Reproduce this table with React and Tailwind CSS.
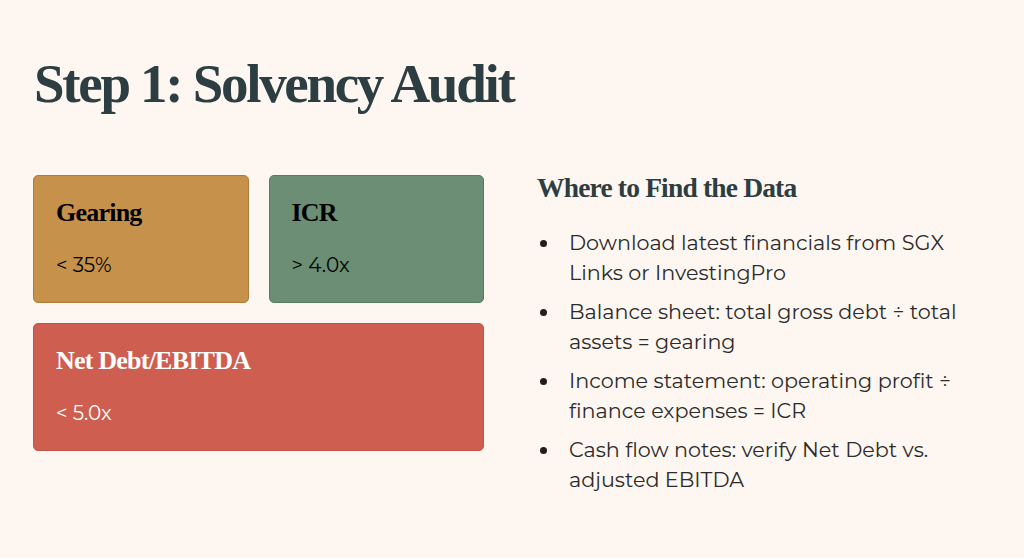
import React from 'react';

const serif = { fontFamily: '"Liberation Serif", "DejaVu Serif", serif' };

const metrics = [
  { name: 'Gearing', value: '< 35%', cls: 'bg-[#c6914a] border-[#b07c38] text-black' },
  { name: 'ICR', value: '> 4.0x', cls: 'bg-[#6b8e74] border-[#587a61] text-black' },
];

const sources = [
  'Download latest financials from SGX Links or InvestingPro',
  'Balance sheet: total gross debt ÷ total assets = gearing',
  'Income statement: operating profit ÷ finance expenses = ICR',
  'Cash flow notes: verify Net Debt vs. adjusted EBITDA',
];

const MetricCard = ({ name, value, cls }) => (
  <div className={`h-[128px] rounded-[5px] border px-[22px] pt-[21px] ${cls}`}>
    <h3 className="text-[26px] font-bold leading-[32px] tracking-[-0.03em]" style={serif}>
      {name}
    </h3>
    <p className="mt-[24px] text-[20px] leading-6">{value}</p>
  </div>
);

export default function App() {
  return (
    <div
      className="w-[1024px] h-[558px] bg-[#fef7f1] pl-[33px] pr-[34px] pt-[52px] text-[#2b2b2b] overflow-hidden"
      style={{ fontFamily: 'Montserrat, "Open Sans", sans-serif' }}
    >
      <h1
        className="pl-[1px] text-[55px] font-bold leading-[64px] tracking-[-0.042em] text-[#2c3e42]"
        style={serif}
      >
        Step 1: Solvency Audit
      </h1>

      <div className="mt-[59px] flex gap-[53px]">
        <div className="w-[451px] flex flex-col gap-[20px]">
          <div className="grid grid-cols-2 gap-[20px]">
            {metrics.map((m) => (
              <MetricCard key={m.name} {...m} />
            ))}
          </div>
          <MetricCard name="Net Debt/EBITDA" value="< 5.0x" cls="bg-[#cd5e50] border-[#c05446] text-white" />
        </div>

        <div className="flex-1 pt-[1px]">
          <h2 className="text-[27.5px] font-bold leading-[24px] tracking-[-0.03em] text-[#2c3e42]" style={serif}>
            Where to Find the Data
          </h2>
          <ul className="mt-[28px] flex flex-col gap-[9px] text-[20.7px] leading-[30px] text-[#2b2b2b] pr-[14px]">
            {sources.map((s) => (
              <li key={s} className="flex">
                <span className="w-[32px] shrink-0 pl-[3px] pt-[12px]">
                  <span className="block h-[7px] w-[7px] rounded-full bg-[#1f1f1f]" />
                </span>
                <span>{s}</span>
              </li>
            ))}
          </ul>
        </div>
      </div>
    </div>
  );
}
